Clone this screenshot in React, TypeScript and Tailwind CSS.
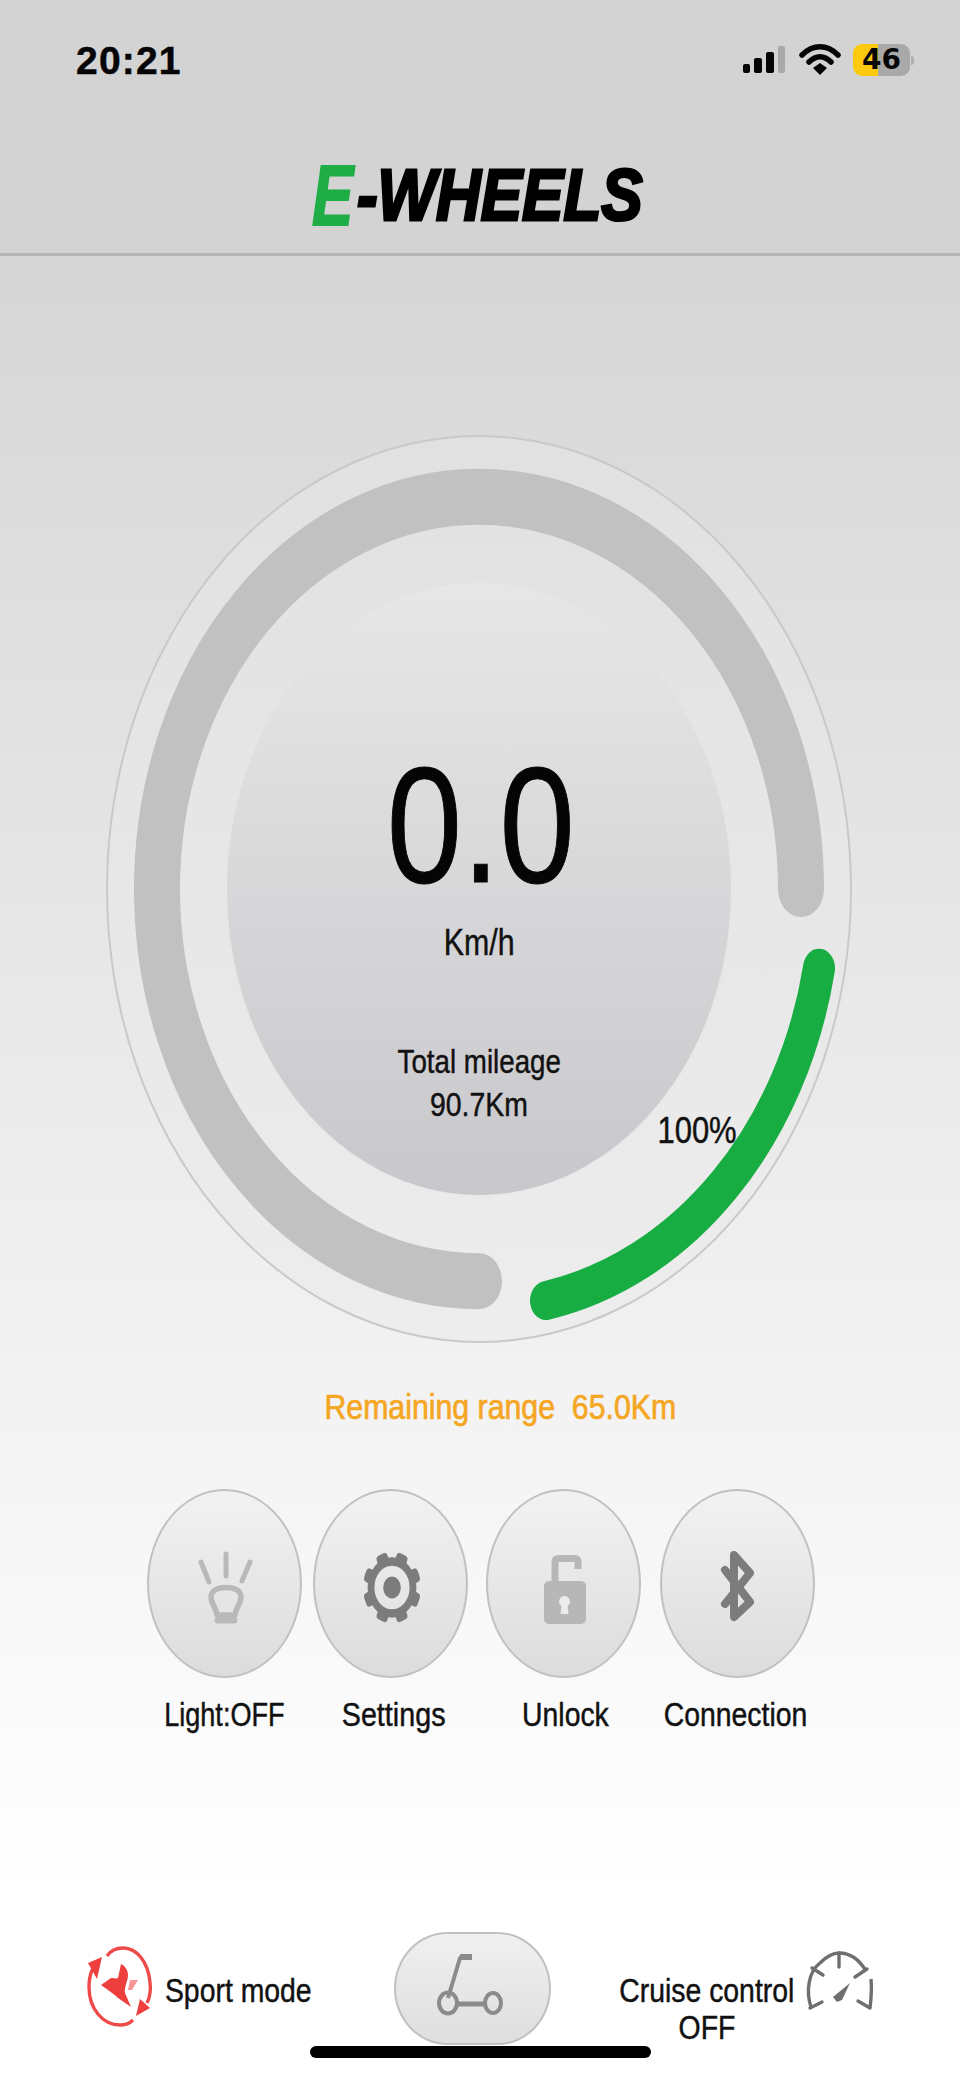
const sans = "font-['Liberation_Sans',Arial,sans-serif]";
const heavy = "[-webkit-text-stroke:0.45px_currentColor]";

function Label({ text, className = "", scale = "scale-x-[0.86]" }: { text: string; className?: string; scale?: string }) {
  return <span className={`inline-block whitespace-pre leading-none text-[33px] text-[#111] ${heavy} ${scale} ${className}`}>{text}</span>;
}

function BulbIcon() {
  return (
    <svg viewBox="0 0 155 189" className="w-full h-full" fill="none" stroke="#b9b9b9" strokeLinecap="round">
      <path d="M79 65V87M54 73L62 93M103 73L95 92" strokeWidth="5" />
      <path d="M70 126C69 118 64 115 64 108C64 101 71 98.5 79 98.5C87 98.5 94 101 94 108C94 115 89 118 88 126Z" strokeWidth="5.5" strokeLinejoin="round" />
      <path d="M71 131H87" strokeWidth="7" />
    </svg>
  );
}

function GearIcon() {
  const angles = [22.5, 67.5, 112.5, 157.5, 202.5, 247.5, 292.5, 337.5];
  return (
    <svg viewBox="0 0 155 189" className="w-full h-full">
      <g transform="translate(79 98.5) scale(1.05 1.3)" fill="#7c7c7c">
        {angles.map((a) => (
          <rect key={a} x="-5.5" y="-27.5" width="11" height="10" rx="3" transform={`rotate(${a})`} />
        ))}
        <circle r="20" fill="none" stroke="#7c7c7c" strokeWidth="6.5" />
        <circle r="8.4" />
      </g>
    </svg>
  );
}

function LockIcon() {
  return (
    <svg viewBox="0 0 155 189" className="w-full h-full">
      <path d="M69 93V73Q69 69.5 73 69.5H88Q92 69.5 92 73V80" fill="none" stroke="#b7b7b7" strokeWidth="7" />
      <rect x="58" y="92" width="42" height="43" rx="5" fill="#b7b7b7" />
      <path d="M78.5 107a5.5 5.5 0 0 1 3 10l1 8h-8l1-8a5.5 5.5 0 0 1 3-10z" fill="#ececec" />
    </svg>
  );
}

function BluetoothIcon() {
  return (
    <svg viewBox="0 0 155 189" className="w-full h-full" fill="none" stroke="#7c7c7c" strokeWidth="8" strokeLinejoin="round" strokeLinecap="round">
      <path d="M65 81L90 113L74 128V66L90 84L65 115" />
    </svg>
  );
}

function ScooterIcon() {
  return (
    <svg viewBox="0 0 157 113" className="w-full h-full" fill="none" stroke="#8b8b8b">
      <path d="M74 26H66L54 66" strokeWidth="4" strokeLinejoin="round" />
      <path d="M66 25H78" strokeWidth="6" />
      <path d="M62 72H92" strokeWidth="5" />
      <ellipse cx="54" cy="71" rx="9" ry="10.5" strokeWidth="4" />
      <ellipse cx="99" cy="71" rx="8" ry="10" strokeWidth="4" />
    </svg>
  );
}

function SportIcon() {
  return (
    <svg viewBox="0 0 90 100" className="w-[90px] h-[100px] shrink-0">
      <g fill="none" stroke="#ee4a4a" strokeWidth="3.4">
        <path d="M32 21C36 15 42 13 48 13C62 13 73 27 75 47C76 55 75 62 72 68" />
        <path d="M58 85C54 89 50 90 45 90C28 90 14 74 14 52C14 45 15 39 18 33" />
      </g>
      <g fill="#ee3f3f">
        <polygon points="27,22 13,28 22,44" />
        <polygon points="65,64 75,73 61,81" />
        <path d="M46 29C50 31 53 35 53 40C53 46 49 52 50 58L56 72L43 63C40 60 36 57 33 55L26 50L36 43C39 43 41 44 43 43Z" />
        <polygon points="55,45 63,45 57,55 53,55" opacity="0.55" />
      </g>
    </svg>
  );
}

function CruiseIcon() {
  return (
    <svg viewBox="0 0 90 80" className="w-[90px] h-[80px] shrink-0" fill="none" stroke="#6f6f6f" strokeWidth="3.4">
      <path d="M16 67C11 52 13 32 25 23C32 16 38 13 44 13C54 13 64 19 71 31" />
      <path d="M76 39C77 50 76 60 75 68" />
      <path d="M44 13V27M17 28L28 35M72 29L60 37M15 68L27 62M75 68L63 61" strokeLinecap="round" />
      <polygon points="55,43 47,60 42,62 38,57" fill="#6f6f6f" stroke="none" />
    </svg>
  );
}

function SignalIcon() {
  return (
    <svg viewBox="0 0 44 30" className="w-[44px] h-[30px]">
      <rect x="0" y="19" width="7" height="9" rx="2" fill="#050505" />
      <rect x="11" y="13" width="8" height="15" rx="2" fill="#050505" />
      <rect x="23" y="7" width="8" height="21" rx="2" fill="#050505" />
      <rect x="35" y="1" width="7" height="27" rx="2" fill="#a9a9a9" />
    </svg>
  );
}

function WifiIcon() {
  return (
    <svg viewBox="0 0 42 32" className="w-[42px] h-[32px]">
      <path d="M3 11C14 0 28 0 39 11" fill="none" stroke="#050505" strokeWidth="5.5" strokeLinecap="round" />
      <path d="M10 18C17 11 25 11 32 18" fill="none" stroke="#050505" strokeWidth="5.5" strokeLinecap="round" />
      <polygon points="14,24 21,19 28,24 21,31" fill="#050505" />
    </svg>
  );
}

const buttons = [
  { label: "Light:OFF", icon: <BulbIcon />, m: "", scale: "scale-x-[0.82]", shift: "" },
  { label: "Settings", icon: <GearIcon />, m: "ml-[11px]", scale: "scale-x-[0.87]", shift: "ml-[6px]" },
  { label: "Unlock", icon: <LockIcon />, m: "ml-[18px]", scale: "scale-x-[0.86]", shift: "ml-[3px]" },
  { label: "Connection", icon: <BluetoothIcon />, m: "ml-[19px]", scale: "scale-x-[0.86]", shift: "-ml-[4px]" },
];

export default function App() {
  return (
    <div className={`relative w-[960px] h-[2078px] flex flex-col overflow-hidden bg-white text-[#111] ${sans}`}>
      <header className="h-[256px] shrink-0 flex flex-col bg-[#d3d3d3] border-b-[3px] border-[#b6b6b6]">
        <div className="flex items-center justify-between h-[30px] mt-[45px] pl-[76px] pr-[46px]">
          <span className="font-bold text-[39px] leading-none tracking-[1.2px] text-[#050505] [-webkit-text-stroke:0.5px_#050505]">20:21</span>
          <div className="flex items-center">
            <SignalIcon />
            <span className="ml-[12px]"><WifiIcon /></span>
            <div className="ml-[12px] w-[57px] h-[32px] rounded-[9px] flex items-center justify-center bg-[linear-gradient(90deg,#fbca10_44%,#a9a9a9_44%)] font-['DejaVu_Sans',sans-serif] font-bold text-[28px] leading-none text-[#050505]">46</div>
            <div className="ml-[1px] w-[3px] h-[9px] rounded-r-full bg-[#b0b0b0]" />
          </div>
        </div>
        <div className="relative flex items-center h-[64px] mt-[88px] ml-[312px] w-[331px]">
          <span className="inline-block w-[45px] origin-left scale-x-[0.72] font-bold italic text-[86px] leading-none text-[#1fae45] [-webkit-text-stroke:2px_#1fae45]">E</span>
          <span className="inline-block origin-left scale-x-[0.86] font-bold italic text-[72px] leading-none text-black [-webkit-text-stroke:3px_#000] whitespace-nowrap">-WHEELS</span>
        </div>
      </header>

      <main className="flex-1 flex flex-col bg-[linear-gradient(180deg,#d6d6d6,#ffffff)]">
        <div className="relative mt-[179px] ml-[106px] w-[746px] h-[908px] shrink-0 rounded-[50%] border-2 border-[#c9c9c9] bg-[linear-gradient(180deg,#e1e1e1,#ededed)] flex items-center justify-center box-border">
          <svg viewBox="-373 -372.8 746 745.6" preserveAspectRatio="none" className="absolute -inset-[2px] w-[746px] h-[908px]" fill="none">
            <path d="M322 0A322 322 0 1 0 0 322" stroke="#c1c1c1" strokeWidth="46" strokeLinecap="round" />
            <path d="M340 65A346 346 0 0 1 67 338" stroke="#18ad42" strokeWidth="32" strokeLinecap="round" />
          </svg>
          <div className="relative w-[504px] h-[612px] rounded-[50%] bg-[linear-gradient(180deg,#e7e7e7,#c8c8cc)] flex flex-col items-center shadow-[0_0_3px_#e4e4e4]">
            <span className="mt-[160px] ml-[4px] text-[165px] leading-[165px] scale-x-[0.82] whitespace-nowrap text-[#050505] [-webkit-text-stroke:1px_#050505]">0.0</span>
            <span className={`mt-[13px] text-[37px] leading-[44px] scale-x-[0.82] whitespace-nowrap ${heavy}`}>Km/h</span>
            <Label text="Total mileage" className="mt-[80px]" scale="scale-x-[0.84]" />
            <Label text="90.7Km" className="mt-[10px]" />
          </div>
          <span className={`absolute left-[543px] top-[676px] text-[36px] leading-none scale-x-[0.86] whitespace-nowrap ${heavy}`}>100%</span>
        </div>

        <p className="mt-[46px] flex justify-center pl-[40px] h-[36px]">
          <span className={`inline-block leading-[36px] text-[35px] text-[#f5a623] whitespace-pre scale-x-[0.865] [-webkit-text-stroke:0.7px_#f5a623]`}>Remaining range  65.0Km</span>
        </p>

        <div className="flex mt-[64px] ml-[147px]">
          {buttons.map((b) => (
            <div key={b.label} className={`w-[155px] flex flex-col items-center ${b.m}`}>
              <div className="w-[155px] h-[189px] shrink-0 rounded-[50%] border-[2.5px] border-[#c1c1c1] bg-[linear-gradient(180deg,#f2f2f2,#dcdcdc)] overflow-hidden">
                <div className="-m-[2.5px] w-[155px] h-[189px]">{b.icon}</div>
              </div>
              <Label text={b.label} className={`mt-[20px] ${b.shift}`} scale={b.scale} />
            </div>
          ))}
        </div>
      </main>

      <footer className="h-[182px] shrink-0 bg-white flex items-start pt-[36px]">
        <div className="flex items-start ml-[75px] mt-[-3px] h-[100px]">
          <div className="mt-[6px]"><SportIcon /></div>
          <div className="w-[147px] flex justify-center mt-[45px]"><Label text="Sport mode" /></div>
        </div>
        <div className="ml-[82px] w-[157px] h-[113px] rounded-[34%/50%] border-[2.5px] border-[#c1c1c1] bg-[linear-gradient(180deg,#f0f0f0,#dedede)] overflow-hidden">
          <div className="-m-[2.5px] w-[157px] h-[113px]"><ScooterIcon /></div>
        </div>
        <div className="ml-[68px] w-[176px] flex flex-col items-center mt-[42px]">
          <Label text="Cruise control" />
          <Label text="OFF" className="mt-[4px]" />
        </div>
        <div className="mt-[-28px] ml-0 pt-[36px]"><CruiseIcon /></div>
      </footer>

      <div className="absolute left-[310px] bottom-[20px] w-[341px] h-[12px] rounded-full bg-black" />
    </div>
  );
}
